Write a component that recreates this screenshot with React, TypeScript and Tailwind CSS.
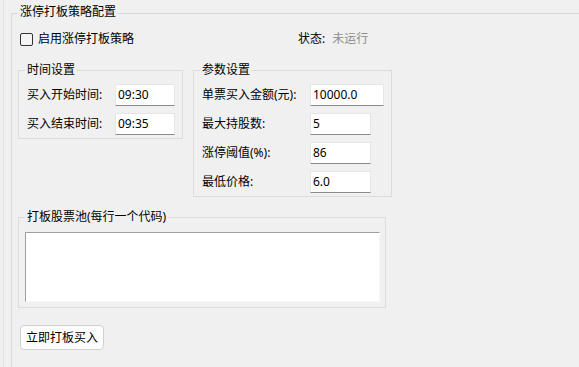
import React from 'react';

const font = { fontFamily: '"Noto Sans", "Noto Sans CJK SC", sans-serif' };

function GroupBox({ title, className, children }: { title: string; className?: string; children: React.ReactNode }) {
  return (
    <div className={`relative border border-[#dcdcdc] ${className || ''}`}>
      <div className="absolute left-[6px] top-[-9px] bg-[#f0f0f0] px-[2px] leading-[16px]">{title}</div>
      {children}
    </div>
  );
}

function Field({ label, value, labelW, inputW }: { label: string; value: string; labelW: string; inputW: string }) {
  return (
    <div className="flex items-center h-[22px]">
      <div className={labelW}>{label}</div>
      <div className={`${inputW} h-[22px] bg-white border border-[#e6e6e6] border-b-[#8a8a8a] pl-[2px] leading-[20px]`}>{value}</div>
    </div>
  );
}

export default function App() {
  return (
    <div className="w-[579px] h-[367px] overflow-hidden bg-[#f0f0f0] pl-[3px] text-[12px] text-black" style={font}>
      <div className="h-full border-l border-[#e2e2e2] pl-[7px] pt-[13px]">
        {/* main group */}
        <div className="relative border-l border-t border-[#d9d9d9] h-[400px] w-[600px]">
          <div className="absolute left-[6px] top-[-10px] bg-[#f0f0f0] px-[2px] leading-[16px]">涨停打板策略配置</div>
          <div className="pl-[6px] pt-[17px]">
            <div className="flex items-center h-[16px]">
              <div className="w-[280px] flex items-center">
                <div className="ml-[2px] w-[13px] h-[13px] border border-[#333] rounded-[2px] bg-[#f5f5f5]" />
                <span className="ml-[5px]">启用涨停打板策略</span>
              </div>
              <span>状态:</span>
              <span className="ml-[7px] text-[#8c8c8c]">未运行</span>
            </div>

            <div className="flex items-start gap-[10px] mt-[23px]">
              <GroupBox title="时间设置" className="w-[165px] pl-[8px] pt-[13px] pb-[3px]">
                <div className="flex flex-col gap-[7px]">
                  <Field label="买入开始时间:" value="09:30" labelW="w-[88px]" inputW="w-[60px]" />
                  <Field label="买入结束时间:" value="09:35" labelW="w-[88px]" inputW="w-[60px]" />
                </div>
              </GroupBox>
              <GroupBox title="参数设置" className="w-[199px] pl-[8px] pt-[13px] pb-[3px]">
                <div className="flex flex-col gap-[7px]">
                  <Field label="单票买入金额(元):" value="10000.0" labelW="w-[108px]" inputW="w-[74px]" />
                  <Field label="最大持股数:" value="5" labelW="w-[108px]" inputW="w-[61px]" />
                  <Field label="涨停阈值(%):" value="86" labelW="w-[108px]" inputW="w-[61px]" />
                  <Field label="最低价格:" value="6.0" labelW="w-[108px]" inputW="w-[61px]" />
                </div>
              </GroupBox>
            </div>

            <GroupBox title="打板股票池(每行一个代码)" className="mt-[20px] w-[368px] pl-[6px] pr-[5px] pt-[14px] pb-[5px]">
              <div className="h-[70px] bg-white border border-t-[#a0a0a0] border-l-[#a0a0a0] border-r-[#f7f7f7] border-b-[#f7f7f7]" />
            </GroupBox>

            <button className="mt-[17px] ml-[2px] w-[84px] h-[25px] bg-[#fdfdfd] border border-[#d0d0d0] rounded-[4px] leading-[23px] text-center">
              立即打板买入
            </button>
          </div>
        </div>
      </div>
    </div>
  );
}
